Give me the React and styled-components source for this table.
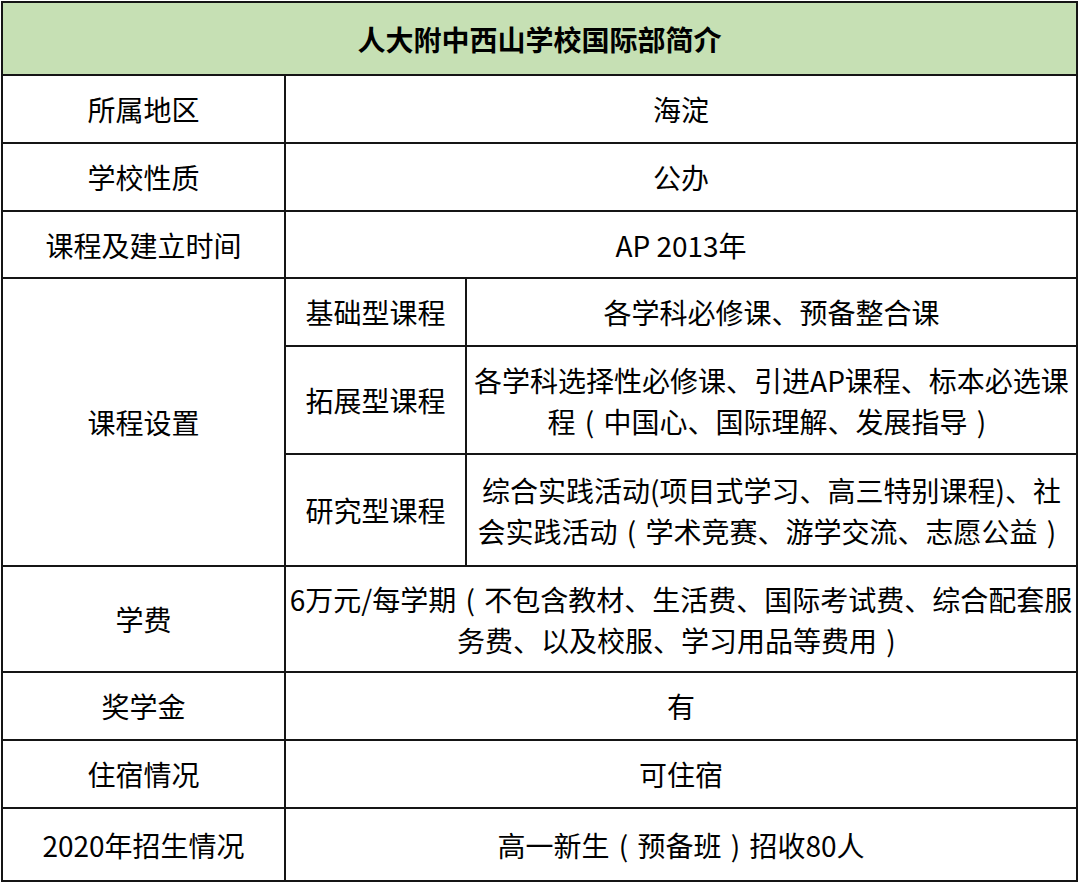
import React from "react";
import styled, { createGlobalStyle } from "styled-components";

const Global = createGlobalStyle`
  html, body { margin: 0; padding: 0; background: #ffffff; }
  body { font-family: "Noto Sans CJK SC", "Noto Sans", sans-serif; color: #000; }
`;

const Sheet = styled.div`
  margin: 1px 0 0 1px;
  width: 1077px;
  box-sizing: border-box;
  display: grid;
  grid-template-columns: 281px 179px 609px;
  grid-template-rows: 71px 66px 66px 65px 66px 106px 110px 104px 66px 66px 71px;
  gap: 2px;
  padding: 2px;
  background: #151515;
`;

const Cell = styled.div`
  grid-column: ${(p) => p.$col || "auto"};
  grid-row: ${(p) => p.$row || "auto"};
  background: #ffffff;
  display: flex;
  flex-direction: column;
  align-items: center;
  justify-content: center;
  text-align: center;
  font-size: 28px;
  line-height: 41px;
  color: #000;
  padding-top: 1px;
`;

const Title = styled(Cell)`
  background: #c6e0b4;
  font-weight: 700;
  font-size: 28px;
`;

const Line = styled.span`
  display: block;
  white-space: nowrap;
`;

const Paren = styled.span`
  display: inline-block;
  width: 1em;
  text-align: center;
`;

const rows = [
  ["所属地区", ["海淀"], 2],
  ["学校性质", ["公办"], 3],
  ["课程及建立时间", ["AP 2013年"], 4],
];

const courses = [
  ["基础型课程", ["各学科必修课、预备整合课"], 5],
  ["拓展型课程", ["各学科选择性必修课、引进AP课程、标本必选课", "程（中国心、国际理解、发展指导）"], 6],
  ["研究型课程", ["综合实践活动(项目式学习、高三特别课程)、社", "会实践活动（学术竞赛、游学交流、志愿公益）"], 7],
];

const tail = [
  ["学费", ["6万元/每学期（不包含教材、生活费、国际考试费、综合配套服", "务费、以及校服、学习用品等费用）"], 8],
  ["奖学金", ["有"], 9],
  ["住宿情况", ["可住宿"], 10],
  ["2020年招生情况", ["高一新生（预备班）招收80人"], 11],
];

const renderText = (t) =>
  t.split(/([（）])/).map((part, i) =>
    part === "（" ? <Paren key={i}>(</Paren> : part === "）" ? <Paren key={i}>)</Paren> : part
  );

const Lines = ({ items }) => items.map((t, i) => <Line key={i}>{renderText(t)}</Line>);

export default function App() {
  return (
    <>
      <Global />
      <Sheet>
        <Title $col="1 / 4" $row="1">人大附中西山学校国际部简介</Title>
        {rows.map(([k, v, r]) => (
          <React.Fragment key={k}>
            <Cell $col="1" $row={r}>{k}</Cell>
            <Cell $col="2 / 4" $row={r}><Lines items={v} /></Cell>
          </React.Fragment>
        ))}
        <Cell $col="1" $row="5 / 8">课程设置</Cell>
        {courses.map(([k, v, r]) => (
          <React.Fragment key={k}>
            <Cell $col="2" $row={r}>{k}</Cell>
            <Cell $col="3" $row={r}><Lines items={v} /></Cell>
          </React.Fragment>
        ))}
        {tail.map(([k, v, r]) => (
          <React.Fragment key={k}>
            <Cell $col="1" $row={r}>{k}</Cell>
            <Cell $col="2 / 4" $row={r}><Lines items={v} /></Cell>
          </React.Fragment>
        ))}
      </Sheet>
    </>
  );
}
